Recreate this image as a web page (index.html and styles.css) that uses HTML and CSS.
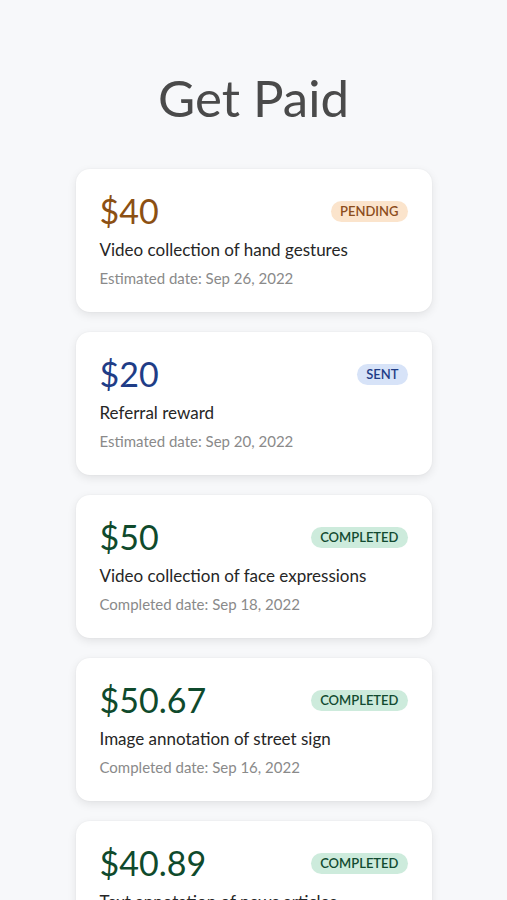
FILE: index.html
```html
<!DOCTYPE html>
<html lang="en">
<head>
    <meta charset="UTF-8">
    <meta name="viewport" content="width=device-width, initial-scale=1.0">
    <title>Get Paid</title>
    <link rel="stylesheet" href="styles.css">
</head>
<body>
    <div class="page">
        <h1>Get Paid</h1>

        <div class="payments">
            <div class="card">
                <div class="card-top">
                    <span class="amount pending">$40</span>
                    <span class="badge badge-pending">PENDING</span>
                </div>
                <p class="task">Video collection of hand gestures</p>
                <p class="date">Estimated date: Sep 26, 2022</p>
            </div>

            <div class="card">
                <div class="card-top">
                    <span class="amount sent">$20</span>
                    <span class="badge badge-sent">SENT</span>
                </div>
                <p class="task">Referral reward</p>
                <p class="date">Estimated date: Sep 20, 2022</p>
            </div>

            <div class="card">
                <div class="card-top">
                    <span class="amount completed">$50</span>
                    <span class="badge badge-completed">COMPLETED</span>
                </div>
                <p class="task">Video collection of face expressions</p>
                <p class="date">Completed date: Sep 18, 2022</p>
            </div>

            <div class="card">
                <div class="card-top">
                    <span class="amount completed">$50.67</span>
                    <span class="badge badge-completed">COMPLETED</span>
                </div>
                <p class="task">Image annotation of street sign</p>
                <p class="date">Completed date: Sep 16, 2022</p>
            </div>

            <div class="card">
                <div class="card-top">
                    <span class="amount completed">$40.89</span>
                    <span class="badge badge-completed">COMPLETED</span>
                </div>
                <p class="task">Text annotation of news articles</p>
                <p class="date">Completed date: Sep 14, 2022</p>
            </div>
        </div>
    </div>
</body>
</html>
```

FILE: styles.css
```css
body {
    margin: 0;
    background-color: #f7f8fa;
    font-family: "Lato", "Noto Sans", sans-serif;
    overflow: hidden;
}
.page {
    width: 356px;
    margin: 0 auto;
}
h1 {
    margin: 0;
    padding-top: 66px;
    height: 64px;
    line-height: 64px;
    font-size: 51px;
    font-weight: 400;
    color: #4a4a4a;
    text-align: center;
}
.payments {
    margin-top: 39px;
    display: flex;
    flex-direction: column;
    gap: 20px;
}
.card {
    background: white;
    border-radius: 14px;
    padding: 22px 24px 24px;
    box-shadow: 0 3px 10px rgba(0,0,0,0.09), 0 0 2px rgba(0,0,0,0.05);
}
.card-top {
    display: flex;
    justify-content: space-between;
    align-items: center;
    height: 40px;
}
.amount {
    font-size: 34px;
    line-height: 40px;
}
.pending {
    color: #8c5013;
}
.sent {
    color: #1f3d87;
}
.completed {
    color: #0f4a2c;
}
.badge {
    font-size: 13px;
    line-height: 21px;
    padding: 0 9px;
    border-radius: 11px;
    font-weight: 600;
}
.badge-pending {
    background: #fbe4cc;
    color: #8c4d1c;
}
.badge-sent {
    background: #d7e3f8;
    color: #1f3d87;
}
.badge-completed {
    background: #cdebdc;
    color: #124a30;
}
.task {
    margin: 8px 0 0;
    font-size: 17px;
    line-height: 22px;
    color: #262626;
}
.date {
    margin: 7px 0 0;
    font-size: 15px;
    line-height: 20px;
    color: #8a8a8a;
}
```
